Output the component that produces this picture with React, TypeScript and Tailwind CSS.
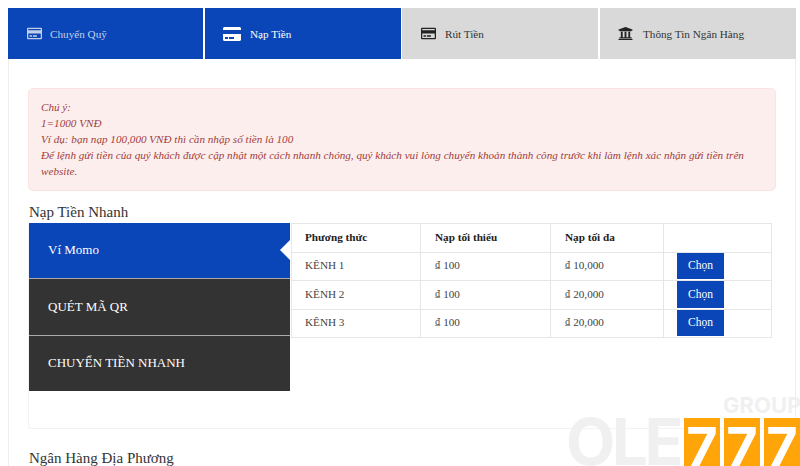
import React from 'react';
import { FaCreditCard, FaRegCreditCard, FaUniversity } from 'react-icons/fa';

const rows = [
  { name: 'KÊNH 1', min: '100', max: '10,000', height: 'h-[28px]', btn: '-mt-px' },
  { name: 'KÊNH 2', min: '100', max: '20,000', height: 'h-[29px]', btn: '' },
  { name: 'KÊNH 3', min: '100', max: '20,000', height: 'h-[28px]', btn: '-mt-px' },
];

const App = () => {
  return (
    <div className="relative h-[466px] w-[800px] overflow-hidden bg-white font-['Liberation_Serif',serif] text-[#333]">
      <div className="ml-2 mt-2 w-[788px]">
        <div className="flex h-[51px] text-[11.2px]">
          <div className="mr-[2px] flex w-[195px] items-center bg-[#0b46b8] pl-[19px] text-[#c3cfe6]">
            <FaRegCreditCard className="mr-2 h-[15px] w-[15px]" />
            <span className="mt-[2px]">Chuyển Quỹ</span>
          </div>
          <div className="mr-[1px] flex w-[196px] items-center bg-[#0b46b8] pl-[18px] text-white">
            <FaCreditCard className="mr-[9px] h-[18px] w-[18px]" />
            <span className="mt-[2px]">Nạp Tiền</span>
          </div>
          <div className="mr-[2px] flex w-[196px] items-center bg-[#d9d9d9] pl-[19px] text-[#333]">
            <FaRegCreditCard className="mr-[9px] h-[15px] w-[15px] text-[#222]" />
            <span className="mt-[2px]">Rút Tiền</span>
          </div>
          <div className="flex w-[196px] items-center bg-[#d9d9d9] pl-[18px] text-[#333]">
            <FaUniversity className="mr-[10px] h-[15px] w-[15px] text-[#222]" />
            <span className="mt-[2px]">Thông Tin Ngân Hàng</span>
          </div>
        </div>

        <div className="h-[420px] border-x border-[#eeeeee] pl-[19px] pr-[19px] pt-[29px]">
          <div className="h-[103px] rounded-[5px] border border-[#fbe3e3] bg-[#fdeeee] px-3 pt-[10px] text-[11.15px] italic leading-4 text-[#a23c3a]">
            <p>Chú ý:</p>
            <p>1=1000 VNĐ</p>
            <p>Ví dụ: bạn nạp 100,000 VNĐ thì cần nhập số tiền là 100</p>
            <p>
              Để lệnh gửi tiền của quý khách được cập nhật một cách nhanh chóng, quý khách vui lòng chuyển khoản thành công trước khi làm lệnh xác nhận gửi tiền trên website.
            </p>
          </div>

          <h2 className="mt-[12px] h-[20px] pl-px text-[15px] leading-[19px] text-[#333]">Nạp Tiền Nhanh</h2>

          <div className="flex h-[206px] items-start rounded-[3px] border-b border-l border-[#f3f3f3]">
            <div className="w-[261px] text-[13px] text-white">
              <div className="relative flex h-[55px] items-center bg-[#0b46b8] pb-[2px] pl-[19px]">
                Ví Momo
                <div className="absolute right-0 top-[17px] h-0 w-0 border-y-[10px] border-r-[10px] border-y-transparent border-r-white" />
              </div>
              <div className="flex h-[57px] items-center border-t border-[#aaaaaa] bg-[#333333] pl-[19px]">QUÉT MÃ QR</div>
              <div className="flex h-[56px] items-center border-t border-[#aaaaaa] bg-[#333333] pb-[2px] pl-[19px]">CHUYỂN TIỀN NHANH</div>
            </div>

            <table className="ml-[1px] w-[480px] table-fixed border-collapse text-[11.2px] text-[#444]">
              <colgroup>
                <col className="w-[129px]" />
                <col className="w-[130px]" />
                <col className="w-[113px]" />
                <col className="w-[108px]" />
              </colgroup>
              <thead>
                <tr className="h-[29px]">
                  <th className="border border-[#e6e6e6] pb-[2px] pl-[13px] text-left font-bold text-[#222]">Phương thức</th>
                  <th className="border border-[#e6e6e6] pb-[2px] pl-[14px] text-left font-bold text-[#222]">Nạp tối thiểu</th>
                  <th className="border border-[#e6e6e6] pb-[2px] pl-[14px] text-left font-bold text-[#222]">Nạp tối đa</th>
                  <th className="border border-[#e6e6e6]"></th>
                </tr>
              </thead>
              <tbody>
                {rows.map((row) => (
                  <tr key={row.name} className={row.height}>
                    <td className="border border-[#e6e6e6] pb-[2px] pl-[13px]">{row.name}</td>
                    <td className="border border-[#e6e6e6] pb-[2px] pl-[14px]">
                      <span className="mr-[3px] align-[1px] text-[10px]">₫</span>
                      {row.min}
                    </td>
                    <td className="border border-[#e6e6e6] pb-[2px] pl-[14px]">
                      <span className="mr-[3px] align-[1px] text-[10px]">₫</span>
                      {row.max}
                    </td>
                    <td className="border border-[#e6e6e6] p-0 pl-[13px] align-top">
                      <button className={`block h-[27px] w-[47px] bg-[#0b46b8] text-[11.5px] text-white ${row.btn}`}>Chọn</button>
                    </td>
                  </tr>
                ))}
              </tbody>
            </table>
          </div>

          <h2 className="mt-[20px] pl-px text-[15px] leading-[19px] text-[#333]">Ngân Hàng Địa Phương</h2>
        </div>
      </div>

      {/* watermark logo */}
      <div className="pointer-events-none absolute bottom-0 right-0 h-[86px] w-[232px] font-['Inter',sans-serif] font-bold">
        <div className="absolute left-[155px] top-[12px] w-[77px] overflow-hidden whitespace-nowrap text-[22px] leading-[26px] text-[#f0f0f0]">GROUP</div>
        <div className="absolute left-[-2px] top-[38px] text-[64px] leading-[48px] tracking-[-3.5px] text-[#f0f0f0]">OLE</div>
        <div className="absolute left-[116px] top-[38px] flex gap-[4px]">
          <div className="flex h-[48px] w-[36px] items-center justify-center overflow-hidden bg-[#ffa50a] pt-[10px] text-[54px] leading-none text-white">7</div>
          <div className="flex h-[48px] w-[36px] items-center justify-center overflow-hidden bg-[#ffa50a] pt-[10px] text-[54px] leading-none text-white">7</div>
          <div className="flex h-[48px] w-[36px] items-center justify-center overflow-hidden bg-[#ffa50a] pt-[10px] text-[54px] leading-none text-white">7</div>
        </div>
      </div>
    </div>
  );
};

export default App;
